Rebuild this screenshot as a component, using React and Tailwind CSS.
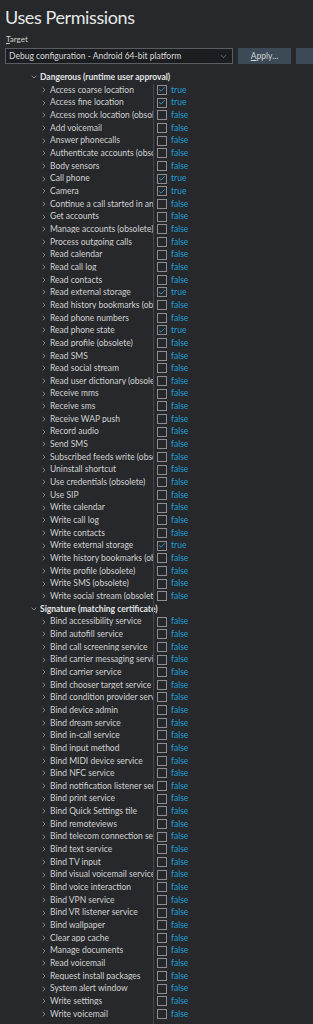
import { ChevronDown, ChevronRight, Check } from "lucide-react";

const dangerous = [
    ["Access coarse location", true],
    ["Access fine location", true],
    ["Access mock location (obsolete)", false],
    ["Add voicemail", false],
    ["Answer phonecalls", false],
    ["Authenticate accounts (obsolete)", false],
    ["Body sensors", false],
    ["Call phone", true],
    ["Camera", true],
    ["Continue a call started in another app", false],
    ["Get accounts", false],
    ["Manage accounts (obsolete)", false],
    ["Process outgoing calls", false],
    ["Read calendar", false],
    ["Read call log", false],
    ["Read contacts", false],
    ["Read external storage", true],
    ["Read history bookmarks (obsolete)", false],
    ["Read phone numbers", false],
    ["Read phone state", true],
    ["Read profile (obsolete)", false],
    ["Read SMS", false],
    ["Read social stream", false],
    ["Read user dictionary (obsolete)", false],
    ["Receive mms", false],
    ["Receive sms", false],
    ["Receive WAP push", false],
    ["Record audio", false],
    ["Send SMS", false],
    ["Subscribed feeds write (obsolete)", false],
    ["Uninstall shortcut", false],
    ["Use credentials (obsolete)", false],
    ["Use SIP", false],
    ["Write calendar", false],
    ["Write call log", false],
    ["Write contacts", false],
    ["Write external storage", true],
    ["Write history bookmarks (obsolete)", false],
    ["Write profile (obsolete)", false],
    ["Write SMS (obsolete)", false],
    ["Write social stream (obsolete)", false],
];

const signature = [
    "Bind accessibility service",
    "Bind autofill service",
    "Bind call screening service",
    "Bind carrier messaging service",
    "Bind carrier service",
    "Bind chooser target service",
    "Bind condition provider service",
    "Bind device admin",
    "Bind dream service",
    "Bind in-call service",
    "Bind input method",
    "Bind MIDI device service",
    "Bind NFC service",
    "Bind notification listener service",
    "Bind print service",
    "Bind Quick Settings tile",
    "Bind remoteviews",
    "Bind telecom connection service",
    "Bind text service",
    "Bind TV input",
    "Bind visual voicemail service",
    "Bind voice interaction",
    "Bind VPN service",
    "Bind VR listener service",
    "Bind wallpaper",
    "Clear app cache",
    "Manage documents",
    "Read voicemail",
    "Request install packages",
    "System alert window",
    "Write settings",
    "Write voicemail",
].map((name) => [name, false]);

function GroupRow({ title, line }) {
    return (
        <div className="flex h-[12.67px] items-center">
            <div className="flex w-[153px] shrink-0 items-center pl-[30px]">
                <ChevronDown className="h-[8px] w-[8px] shrink-0 text-[#b8b8b8]" strokeWidth={2} />
                <span className="ml-[2px] whitespace-nowrap font-bold text-[#e4e4e4]">
                    {title}
                </span>
            </div>
            {line && <div className="h-full border-l border-[#45474b]" />}
        </div>
    );
}

function PermRow({ name, value }) {
    return (
        <div className="flex h-[12.67px] items-center">
            <div className="flex w-[153px] shrink-0 items-center overflow-hidden pl-[40px]">
                <ChevronRight className="h-[8px] w-[8px] shrink-0 text-[#b0b0b0]" strokeWidth={2} />
                <span className="ml-[2px] whitespace-nowrap text-[#d2d2d2]">{name}</span>
            </div>
            <div className="flex h-full items-center border-l border-[#45474b] pl-[3px]">
                <div className="flex h-[10px] w-[10px] items-center justify-center border border-[#8e8e8e]">
                    {value && <Check className="h-[9px] w-[9px] text-[#3aa3e3]" strokeWidth={2.5} />}
                </div>
                <span className="ml-[4px] text-[#1e9fd8]">{value ? "true" : "false"}</span>
            </div>
        </div>
    );
}

export default function App() {
    return (
        <div
            className="min-h-[1024px] w-[313px] overflow-hidden bg-[#26282b] text-[8.5px]"
            style={{ fontFamily: 'Lato, "Open Sans", sans-serif' }}
        >
            <h1 className="pl-[5px] pt-[3px] text-[18px] leading-[28px] tracking-[-0.4px] text-[#e8e8e8]">
                Uses Permissions
            </h1>
            <div className="mt-[3px] pl-[6px] text-[8px] leading-[10px] text-[#d0d0d0]">
                <span className="underline">T</span>arget
            </div>
            <div className="mt-[4px] flex gap-[5px] pl-[5px]">
                <div className="flex h-[16px] w-[228px] shrink-0 items-center justify-between border border-[#5a5e64] bg-[#1c1d20] pl-[3px] pr-[4px] text-[#d8d8d8]">
                    <span>Debug configuration - Android 64-bit platform</span>
                    <ChevronDown className="h-[9px] w-[9px] text-[#a0a0a0]" strokeWidth={1.5} />
                </div>
                <div className="flex h-[16px] w-[53px] shrink-0 items-center justify-center bg-[#3b4a56] text-[#d4d4d4]">
                    <span>
                        <span className="underline">A</span>pply...
                    </span>
                </div>
                <div className="h-[16px] w-[30px] shrink-0 bg-[#3b4a56]" />
            </div>
            <div className="mt-[7px] flex flex-col leading-none">
                <GroupRow title="Dangerous (runtime user approval)" />
                {dangerous.map(([name, value]) => (
                    <PermRow key={name} name={name} value={value} />
                ))}
                <GroupRow title="Signature (matching certificate)" line />
                {signature.map(([name, value]) => (
                    <PermRow key={name} name={name} value={value} />
                ))}
                <div className="ml-[153px] h-[12px] border-l border-[#45474b]" />
            </div>
        </div>
    );
}
